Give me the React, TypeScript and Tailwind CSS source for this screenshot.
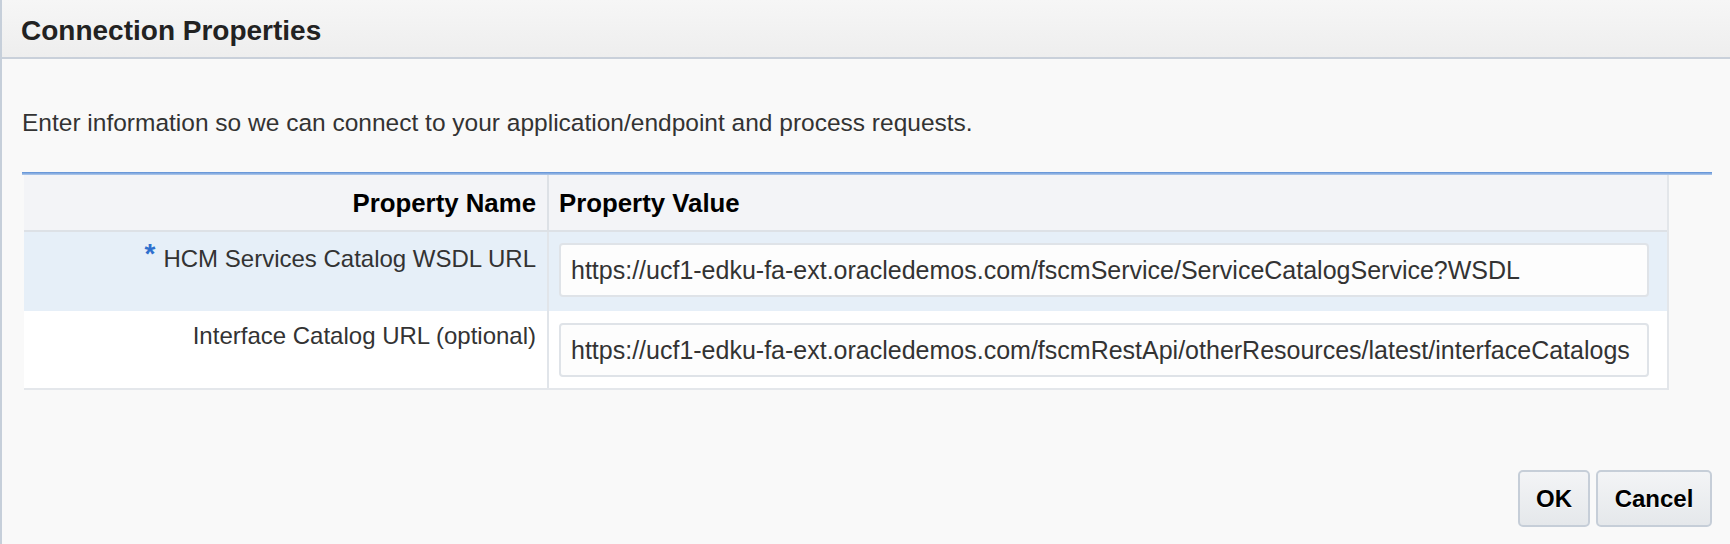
import React from "react";

type PropertyRow = {
  label: string;
  value: string;
  required?: boolean;
};

const rows: PropertyRow[] = [
  {
    label: "HCM Services Catalog WSDL URL",
    value:
      "https://ucf1-edku-fa-ext.oracledemos.com/fscmService/ServiceCatalogService?WSDL",
    required: true,
  },
  {
    label: "Interface Catalog URL (optional)",
    value:
      "https://ucf1-edku-fa-ext.oracledemos.com/fscmRestApi/otherResources/latest/interfaceCatalogs",
  },
];

const DialogButton = ({ label, width }: { label: string; width: string }) => (
  <button
    type="button"
    className={`${width} h-[57px] rounded-[5px] border-2 border-[#c6ced8] bg-linear-to-b from-[#f3f4f6] to-[#e5e8eb] text-[24px] leading-none font-bold text-black [text-shadow:0_1px_0_#fff]`}
  >
    {label}
  </button>
);

export default function App() {
  return (
    <div className="flex h-[544px] w-[1730px] flex-col overflow-hidden border-l-2 border-[#c6cfda] bg-[#f9f9f9] font-['Liberation_Sans',Arial,sans-serif]">
      <header className="flex h-[59px] shrink-0 items-center border-b-2 border-[#c9d0da] bg-linear-to-b from-[#f6f6f6] to-[#eeeeee] pt-[4px] pl-[19px]">
        <h1 className="text-[28px] leading-none font-bold text-[#222]">
          Connection Properties
        </h1>
      </header>

      <main className="flex flex-col pr-[18px] pl-[20px]">
        <p className="mt-[52px] text-[24.5px] leading-6 text-[#333]">
          Enter information so we can connect to your application/endpoint and
          process requests.
        </p>

        <div className="mt-[37px] w-[1690px]">
          <div className="h-[3px] bg-linear-to-b from-[#5a8ed6] to-[#b4cbea]" />
          <div className="ml-[2px] w-[1645px] border-r-2 border-[#e3e6ea]">
            <div className="flex h-[57px] items-center border-b-2 border-[#dde1e6] bg-[#f3f4f7] text-[25.8px] leading-none font-bold text-black">
              <div className="flex h-full w-[525px] items-center justify-end border-r-2 border-[#dde1e6] pt-[3px] pr-[11px]">
                Property Name
              </div>
              <div className="flex h-full flex-1 items-center pt-[3px] pl-[10px]">
                Property Value
              </div>
            </div>

            {rows.map((row, index) => (
              <div
                key={row.label}
                className={
                  index === 0
                    ? "flex h-[79px] bg-[#e6eff8]"
                    : "flex h-[79px] border-b-2 border-[#e4e7eb] bg-white"
                }
              >
                <div
                  className={`w-[525px] border-r-2 border-[#e1e5ea] pr-[11px] text-right text-[24px] leading-6 text-[#333] ${
                    index === 0 ? "pt-[15px]" : "pt-[13px]"
                  }`}
                >
                  {row.required && (
                    <span className="relative -top-[4px] mr-[8px] text-[28px] leading-[0px] font-bold text-[#2f6fce]">
                      *
                    </span>
                  )}
                  {row.label}
                </div>
                <div
                  className={`flex-1 pr-[18px] pl-[10px] ${
                    index === 0 ? "pt-[11px]" : "pt-[12px]"
                  }`}
                >
                  <input
                    type="text"
                    readOnly
                    defaultValue={row.value}
                    className="h-[54px] w-full rounded-[4px] border-2 border-[#dfe3e8] bg-[#fdfdfd] pl-[10px] text-[25px] text-[#333] outline-none"
                  />
                </div>
              </div>
            ))}
          </div>
        </div>

        <div className="mt-[80px] flex justify-end gap-[6px]">
          <DialogButton label="OK" width="w-[72px]" />
          <DialogButton label="Cancel" width="w-[116px]" />
        </div>
      </main>
    </div>
  );
}
